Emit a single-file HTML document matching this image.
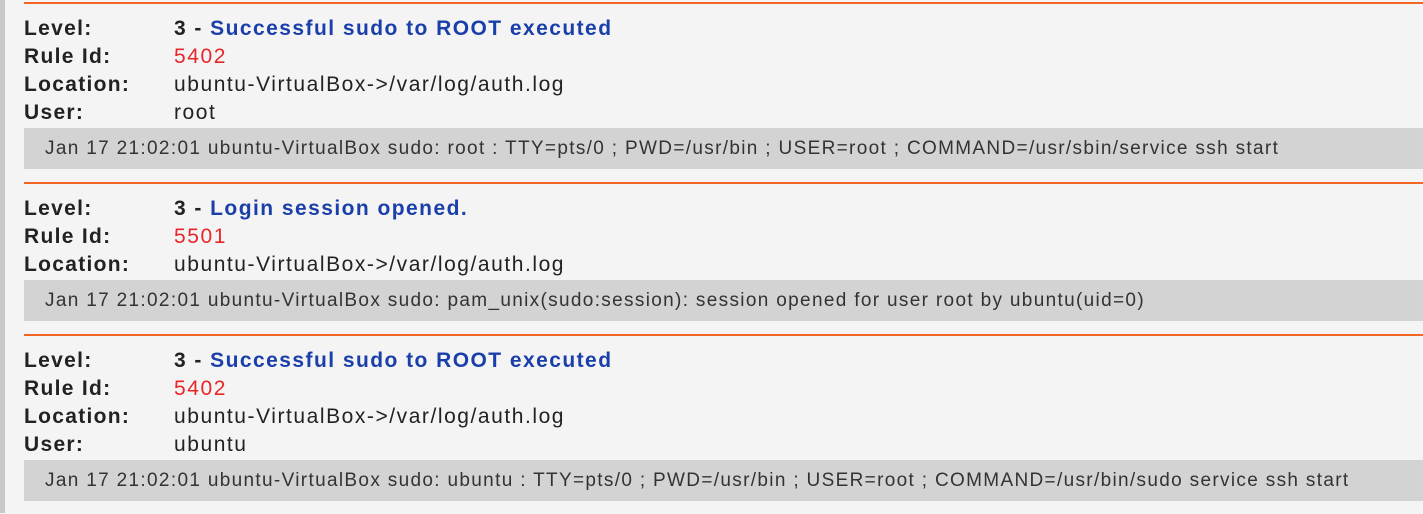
<!DOCTYPE html>
<html><head><meta charset="utf-8"><style>
html,body{margin:0;padding:0;background:#f4f4f4;width:1423px;height:513px;overflow:hidden;font-family:"Liberation Sans",Arial,sans-serif;}
.strip{position:absolute;left:0;top:0;width:5px;height:513px;background:#c8c8c8;}
.wrap{position:absolute;left:24px;top:2px;right:0;}
.blk{border-top:2px solid #f26522;padding-top:11px;padding-bottom:13px;}
.row{height:28px;line-height:28px;font-size:21px;letter-spacing:1.55px;color:#222;white-space:nowrap;}
.lab{display:inline-block;width:150px;font-weight:bold;letter-spacing:1.3px;}
.lv{font-weight:bold;color:#222;letter-spacing:1.45px;}
.lv span{color:#1a3faa;}
.rid{color:#e8262a;}
.log{margin-top:1px;height:41px;line-height:41px;background:#d3d3d3;font-size:19px;letter-spacing:1.33px;color:#333;padding-left:21px;white-space:nowrap;overflow:hidden;}
</style></head><body>
<div class="strip"></div>
<div class="wrap">
<div class="blk">
<div class="row"><span class="lab">Level:</span><span class="lv">3 - <span>Successful sudo to ROOT executed</span></span></div>
<div class="row"><span class="lab">Rule Id:</span><span class="rid">5402</span></div>
<div class="row"><span class="lab">Location:</span>ubuntu-VirtualBox-&gt;/var/log/auth.log</div>
<div class="row"><span class="lab">User:</span>root</div>
<div class="log">Jan 17 21:02:01 ubuntu-VirtualBox sudo: root : TTY=pts/0 ; PWD=/usr/bin ; USER=root ; COMMAND=/usr/sbin/service ssh start</div>
</div>
<div class="blk">
<div class="row"><span class="lab">Level:</span><span class="lv">3 - <span>Login session opened.</span></span></div>
<div class="row"><span class="lab">Rule Id:</span><span class="rid">5501</span></div>
<div class="row"><span class="lab">Location:</span>ubuntu-VirtualBox-&gt;/var/log/auth.log</div>
<div class="log">Jan 17 21:02:01 ubuntu-VirtualBox sudo: pam_unix(sudo:session): session opened for user root by ubuntu(uid=0)</div>
</div>
<div class="blk">
<div class="row"><span class="lab">Level:</span><span class="lv">3 - <span>Successful sudo to ROOT executed</span></span></div>
<div class="row"><span class="lab">Rule Id:</span><span class="rid">5402</span></div>
<div class="row"><span class="lab">Location:</span>ubuntu-VirtualBox-&gt;/var/log/auth.log</div>
<div class="row"><span class="lab">User:</span>ubuntu</div>
<div class="log">Jan 17 21:02:01 ubuntu-VirtualBox sudo: ubuntu : TTY=pts/0 ; PWD=/usr/bin ; USER=root ; COMMAND=/usr/bin/sudo service ssh start</div>
</div>
</div>
</body></html>
